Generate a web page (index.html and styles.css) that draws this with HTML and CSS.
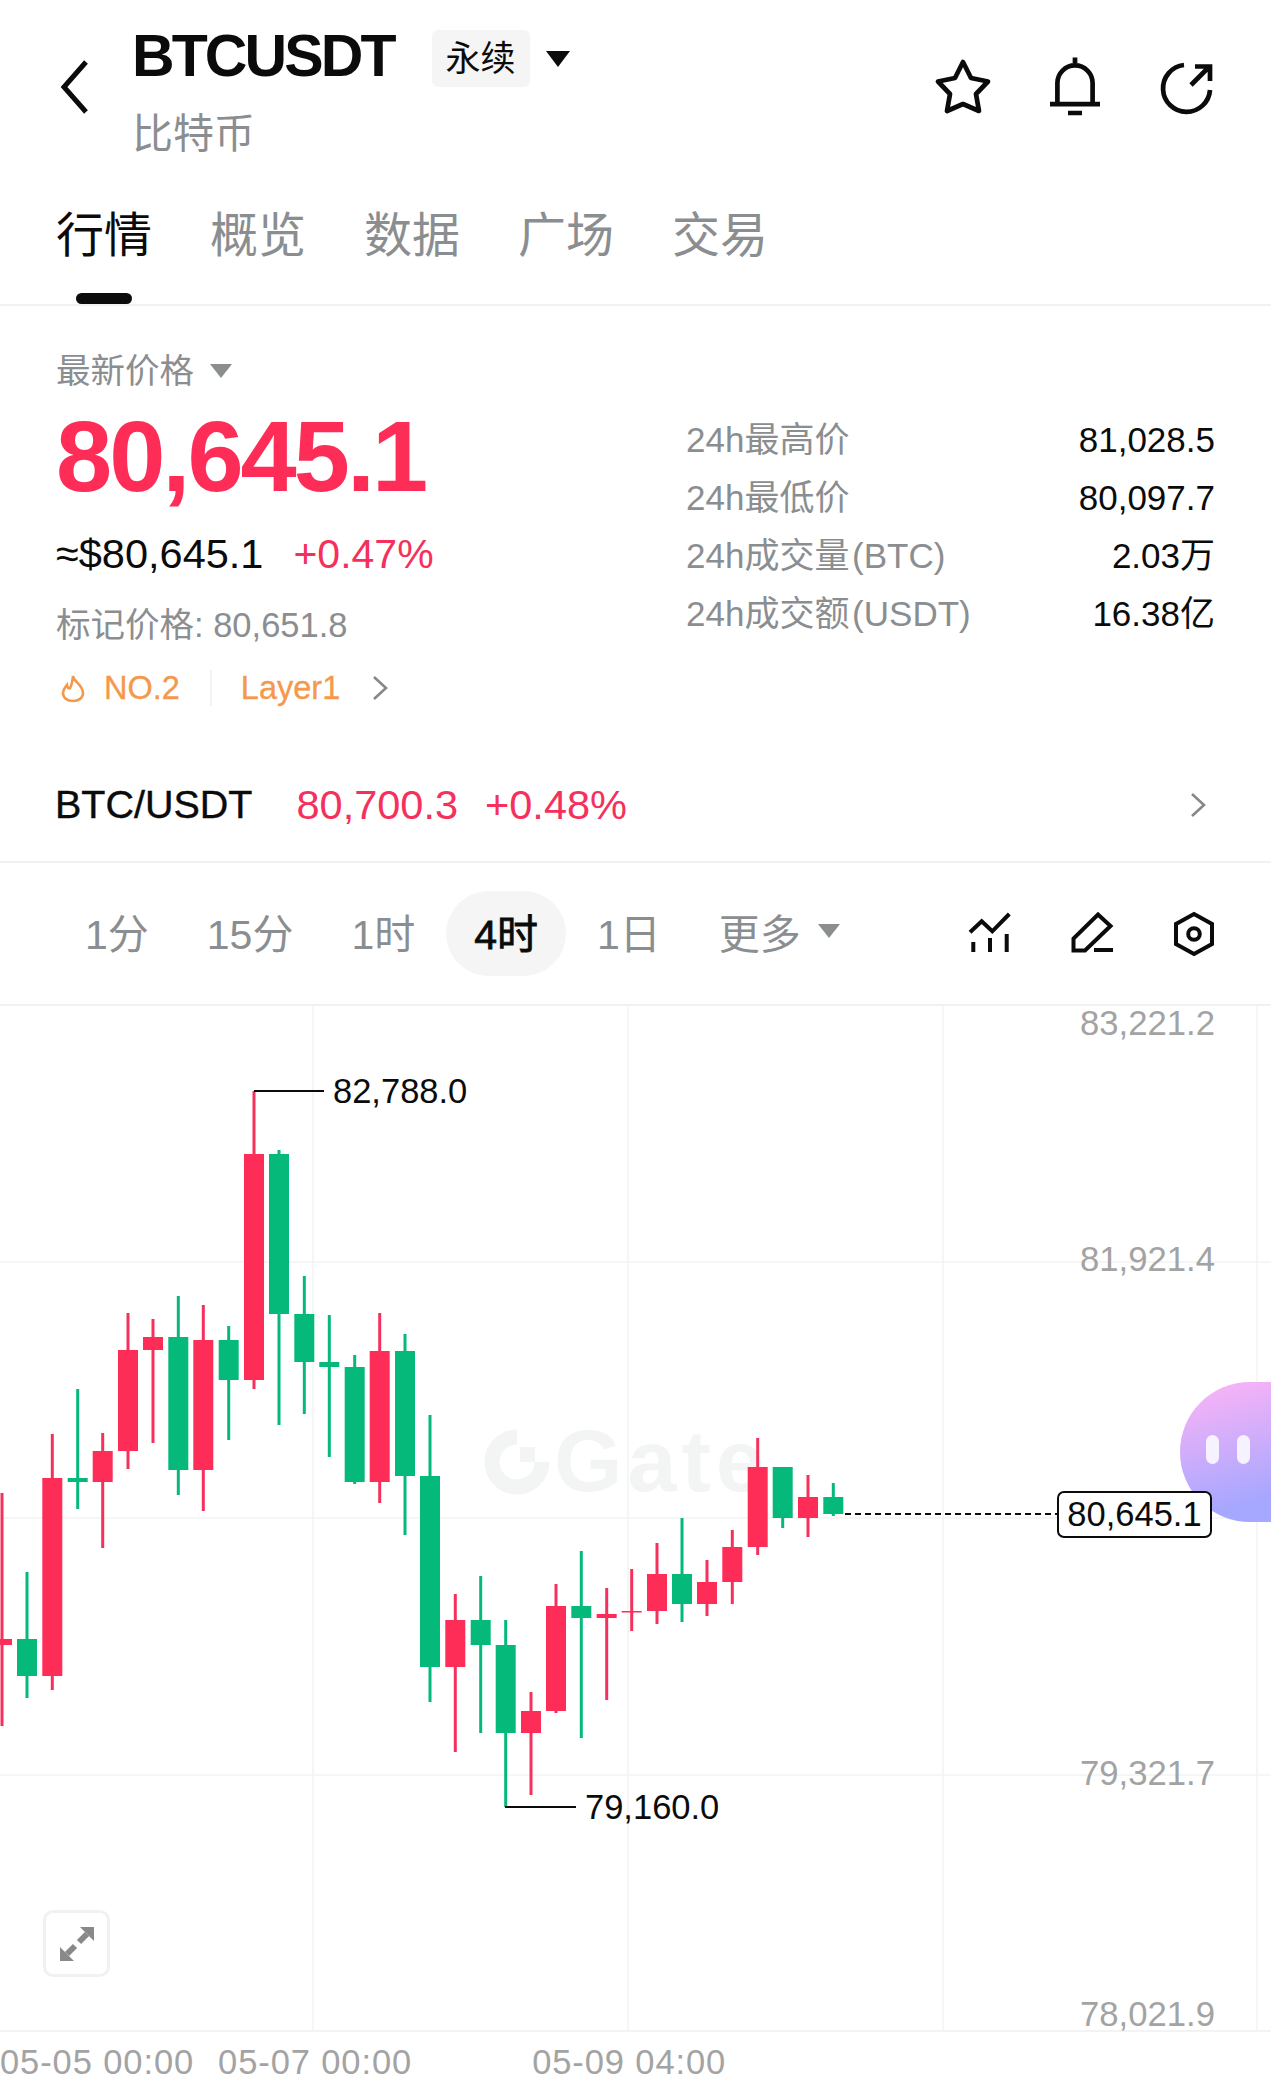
FILE: index.html
```html
<!DOCTYPE html>
<html lang="zh-CN">
<head>
    <meta charset="UTF-8">
    <meta name="viewport" content="width=device-width, initial-scale=1.0">
    <title>BTCUSDT</title>
    <link rel="stylesheet" href="styles.css">
</head>
<body>

    <!-- Top bar -->
    <header class="top-bar">
        <svg class="back-icon" viewBox="0 0 32 56" width="32" height="56"><path d="M27 3L5 28L27 53"/></svg>
        <div class="symbol">
            <div class="symbol-row">
                <h1 class="symbol-name">BTCUSDT</h1>
                <span class="symbol-badge">永续</span>
                <span class="caret caret-dark"></span>
            </div>
            <div class="symbol-sub">比特币</div>
        </div>
        <div class="actions">
            <svg class="icon" viewBox="0 0 60 60" width="60" height="60"><path d="M30 5L38 21L55 24.5L43 37L46 54L30 47L14 54L17 37L5 24.5L22 21Z"/></svg>
            <svg class="icon" viewBox="0 0 60 60" width="60" height="60"><path d="M12.4 47V26a17.6 17.6 0 0 1 35.2 0V47M5 47.2H55M30 .5V6M23 56H37"/></svg>
            <svg class="icon icon-miter" viewBox="0 0 60 60" width="60" height="60"><path d="M27 8A23.5 23.5 0 1 0 53 33M34 28L52 10M38 9.5H53V24"/></svg>
        </div>
    </header>

    <!-- Tabs -->
    <nav class="tabs">
        <a class="tab active">行情</a>
        <a class="tab">概览</a>
        <a class="tab">数据</a>
        <a class="tab">广场</a>
        <a class="tab">交易</a>
    </nav>

    <!-- Price block -->
    <section class="quote">
        <div class="quote-main">
            <div class="quote-label">最新价格 <span class="caret caret-gray"></span></div>
            <div class="quote-price">80,645.1</div>
            <div class="quote-fiat"><span>≈$80,645.1</span><span class="red quote-change">+0.47%</span></div>
            <div class="quote-mark">标记价格: 80,651.8</div>
            <div class="quote-tags">
                <svg class="flame" viewBox="0 0 24 29" width="24" height="29"><path d="M12 2C13 8 22 11 22 19C22 24 17.5 27 12 27C6.5 27 2 24 2 19C2 15 4.5 13 6 11C6.5 14 8 15 9 14C11 11 11.5 6 12 2Z"/></svg>
                <span class="tag-rank">NO.2</span>
                <span class="tag-sep"></span>
                <span class="tag-rank">Layer1</span>
                <svg class="chevron tag-chevron" viewBox="0 0 16 26" width="16" height="26"><path d="M2 2L14 13L2 24"/></svg>
            </div>
        </div>
        <div class="stats">
            <div class="stat"><span class="stat-key">24h最高价</span><span>81,028.5</span></div>
            <div class="stat"><span class="stat-key">24h最低价</span><span>80,097.7</span></div>
            <div class="stat"><span class="stat-key">24h成交量 (BTC)</span><span>2.03万</span></div>
            <div class="stat"><span class="stat-key">24h成交额 (USDT)</span><span>16.38亿</span></div>
        </div>
    </section>

    <!-- Spot pair -->
    <div class="spot">
        <span class="spot-name">BTC/USDT</span>
        <span class="red spot-price">80,700.3</span>
        <span class="red spot-change">+0.48%</span>
        <svg class="chevron spot-chevron" viewBox="0 0 16 26" width="16" height="26"><path d="M2 2L14 13L2 24"/></svg>
    </div>

    <!-- Intervals -->
    <div class="ranges">
        <span class="range">1分</span>
        <span class="range">15分</span>
        <span class="range">1时</span>
        <span class="range active">4时</span>
        <span class="range">1日</span>
        <span class="range range-more">更多<span class="caret caret-gray"></span></span>
        <div class="tools">
            <svg class="icon icon-thin" viewBox="0 0 60 60" width="60" height="60"><path d="M10 28.3L21.7 17.3L32.3 27.3L49.3 10M13.3 38V48M30 34V48M46.7 30V48"/></svg>
            <svg class="icon icon-thin" viewBox="0 0 60 60" width="60" height="60"><path d="M36 10.5L48.5 22L23 46.5H11.5V34.5ZM32 46H51"/></svg>
            <svg class="icon icon-thin" viewBox="0 0 60 60" width="60" height="60"><path d="M30 10L48 20V40L30 50L12 40V20Z"/><circle cx="30" cy="30" r="5.8"/></svg>
        </div>
    </div>

    <!-- Chart -->
    <div class="chart">
        <svg class="chart-canvas" viewBox="0 1006 1271 1026" width="1271" height="1026">
            <g class="grid">
                <path d="M0 1262H1271M0 1518H1271M0 1775H1271M313 1006V2032M628 1006V2032M943 1006V2032M1257 1006V2032"/>
            </g>
            <g class="watermark">
                <path class="watermark-ring" d="M517 1437A25 25 0 1 0 542 1462"/>
                <rect x="520" y="1447" width="15" height="15"/>
                <text x="554" y="1491">Gate</text>
            </g>
            <g class="rise"><path d="M2 1493V1726"/><rect x="-8" y="1639" width="20" height="6"/></g>
            <g class="fall"><path d="M27 1572V1698"/><rect x="17" y="1639" width="20" height="37"/></g>
            <g class="rise"><path d="M52.3 1434V1690"/><rect x="42.3" y="1478" width="20" height="198"/></g>
            <g class="fall"><path d="M77.7 1389V1509"/><rect x="67.7" y="1478" width="20" height="4"/></g>
            <g class="rise"><path d="M102.7 1433V1548"/><rect x="92.7" y="1451" width="20" height="31"/></g>
            <g class="rise"><path d="M128 1313V1469"/><rect x="118" y="1350" width="20" height="101"/></g>
            <g class="rise"><path d="M153 1319V1443"/><rect x="143" y="1337" width="20" height="13"/></g>
            <g class="fall"><path d="M178.3 1296V1495"/><rect x="168.3" y="1337" width="20" height="133"/></g>
            <g class="rise"><path d="M203.3 1305V1511"/><rect x="193.3" y="1340" width="20" height="130"/></g>
            <g class="fall"><path d="M228.7 1326V1440"/><rect x="218.7" y="1340" width="20" height="40"/></g>
            <g class="rise"><path d="M254 1091V1389"/><rect x="244" y="1154" width="20" height="226"/></g>
            <g class="fall"><path d="M279 1150V1425"/><rect x="269" y="1154" width="20" height="160"/></g>
            <g class="fall"><path d="M304.3 1276V1414"/><rect x="294.3" y="1314" width="20" height="48"/></g>
            <g class="fall"><path d="M329.3 1315V1457"/><rect x="319.3" y="1362" width="20" height="5"/></g>
            <g class="fall"><path d="M354.7 1355V1484"/><rect x="344.7" y="1367" width="20" height="115"/></g>
            <g class="rise"><path d="M379.7 1313V1503"/><rect x="369.7" y="1351" width="20" height="131"/></g>
            <g class="fall"><path d="M405 1334V1535"/><rect x="395" y="1351" width="20" height="125"/></g>
            <g class="fall"><path d="M430 1415V1702"/><rect x="420" y="1476" width="20" height="191"/></g>
            <g class="rise"><path d="M455.3 1594V1752"/><rect x="445.3" y="1620" width="20" height="47"/></g>
            <g class="fall"><path d="M480.7 1576V1733"/><rect x="470.7" y="1620" width="20" height="25"/></g>
            <g class="fall"><path d="M505.7 1620V1807"/><rect x="495.7" y="1645" width="20" height="88"/></g>
            <g class="rise"><path d="M531 1692V1795"/><rect x="521" y="1711" width="20" height="22"/></g>
            <g class="rise"><path d="M556 1584V1713"/><rect x="546" y="1606" width="20" height="105"/></g>
            <g class="fall"><path d="M581.3 1551V1738"/><rect x="571.3" y="1606" width="20" height="12"/></g>
            <g class="rise"><path d="M606.7 1588V1700"/><rect x="596.7" y="1614" width="20" height="4"/></g>
            <g class="rise"><path d="M631.7 1569V1631"/><rect x="621.7" y="1611" width="20" height="1.5"/></g>
            <g class="rise"><path d="M657 1543V1624"/><rect x="647" y="1574" width="20" height="37"/></g>
            <g class="fall"><path d="M682 1518V1622"/><rect x="672" y="1574" width="20" height="30"/></g>
            <g class="rise"><path d="M707 1560V1616"/><rect x="697" y="1582" width="20" height="22"/></g>
            <g class="rise"><path d="M732.3 1530V1604"/><rect x="722.3" y="1547" width="20" height="35"/></g>
            <g class="rise"><path d="M757.7 1438V1555"/><rect x="747.7" y="1467" width="20" height="80"/></g>
            <g class="fall"><path d="M782.7 1467V1528"/><rect x="772.7" y="1467" width="20" height="51"/></g>
            <g class="rise"><path d="M808 1475V1537"/><rect x="798" y="1497" width="20" height="21"/></g>
            <g class="fall"><path d="M833.3 1483V1516"/><rect x="823.3" y="1497" width="20" height="17"/></g>

            <path class="leader" d="M254 1091H324M505 1807H576"/>
            <path class="last-line" d="M845 1514H1058"/>
            <text class="extreme" x="333" y="1103">82,788.0</text>
            <text class="extreme" x="585" y="1819">79,160.0</text>
            <text class="axis-y" x="1215" y="1035">83,221.2</text>
            <text class="axis-y" x="1215" y="1271">81,921.4</text>
            <text class="axis-y" x="1215" y="1785">79,321.7</text>
            <text class="axis-y" x="1215" y="2026">78,021.9</text>
        </svg>

        <div class="bot-bubble"><span class="bot-eye"></span><span class="bot-eye"></span></div>
        <div class="last-price">80,645.1</div>
        <div class="expand">
            <svg viewBox="0 0 34 34" width="34" height="34"><path class="expand-head" d="M20 0H34V14ZM0 34H14L0 20Z"/><path class="expand-shaft" d="M27 7L19 15M7 27L15 19"/></svg>
        </div>
    </div>

    <div class="axis-x">
        <span>05-05 00:00</span>
        <span class="axis-x-second">05-07 00:00</span>
        <span class="axis-x-third">05-09 04:00</span>
    </div>

</body>
</html>
```

FILE: styles.css
```css
* { box-sizing: border-box; }

body {
    margin: 0;
    width: 1271px;
    height: 2090px;
    overflow: hidden;
    background: #fff;
    color: #0b0b0b;
    font-family: "Liberation Sans", "Noto Sans CJK SC", sans-serif;
}

.red { color: #f6305c; }

/* shared icons */
.icon { fill: none; stroke: #0b0b0b; stroke-width: 4.7; stroke-linejoin: round; flex: none; }
.icon-miter { stroke-linejoin: miter; }
.icon-thin { stroke-width: 4; stroke-linejoin: miter; }
.chevron { fill: none; stroke: #85888a; stroke-width: 2.6; flex: none; }

.caret {
    display: inline-block;
    width: 0;
    height: 0;
    border-style: solid;
    border-color: transparent;
    border-bottom-width: 0;
}
.caret-dark { border-width: 16px 12px 0; border-top-color: #0b0b0b; margin-left: 16px; margin-top: 5px; }
.caret-gray { border-width: 14px 11px 0; border-top-color: #8b8e90; }

/* top bar */
.top-bar { display: flex; height: 190px; padding: 0 54px 0 59px; }
.back-icon { fill: none; stroke: #0b0b0b; stroke-width: 5; margin-top: 59px; flex: none; }
.symbol { margin-left: 41px; padding-top: 23px; }
.symbol-row { display: flex; align-items: center; height: 66px; }
.symbol-name { margin: 0; font-size: 59px; font-weight: 700; letter-spacing: -2.9px; line-height: 56px; }
.symbol-badge {
    width: 98px;
    height: 57px;
    margin-left: 38px;
    margin-top: 4px;
    border-radius: 6px;
    background: #f5f5f5;
    font-size: 35px;
    line-height: 57px;
    text-align: center;
}
.symbol-sub { margin-top: 19px; font-size: 41px; line-height: 52px; color: #8b8e90; }
.actions { display: flex; gap: 52px; margin-left: auto; margin-top: 57px; }

/* tabs */
.tabs { display: flex; gap: 58px; height: 116px; padding-left: 56px; border-bottom: 2px solid #f1f1f1; }
.tab { position: relative; height: 114px; font-size: 48px; line-height: 92px; color: #8b8e90; }
.tab.active { color: #0b0b0b; }
.tab.active::after {
    content: "";
    position: absolute;
    left: 20px;
    bottom: 0;
    width: 56px;
    height: 11px;
    border-radius: 6px;
    background: #0b0b0b;
}

/* price block */
.quote { display: flex; }
.quote-main { width: 686px; padding: 43px 0 40px 56px; }
.quote-label { display: flex; align-items: center; gap: 16px; font-size: 34.5px; line-height: 44px; color: #8b8e90; }
.quote-price { height: 100px; margin-top: 13px; font-size: 101px; font-weight: 700; letter-spacing: -3px; line-height: 100px; color: #fe2d58; }
.quote-fiat { display: flex; gap: 30px; margin-top: 23px; font-size: 41.5px; line-height: 50px; }
.quote-change { font-size: 41px; }
.quote-mark { margin-top: 24px; font-size: 34.5px; line-height: 44px; color: #8b8e90; }
.quote-tags { display: flex; align-items: center; height: 40px; margin-top: 21px; padding-left: 5px; font-size: 32.5px; color: #f5984c; }
.flame { fill: none; stroke: #f5984c; stroke-width: 2.6; margin-right: 19px; }
.tag-rank { -webkit-text-stroke: .3px #f5984c; }
.tag-sep { width: 2px; height: 36px; margin: 0 29px 0 30px; background: #f3f3f3; }
.tag-chevron { margin-left: 32px; }

.stats { flex: 1; padding: 105px 56px 0 0; }
.stat { display: flex; justify-content: space-between; height: 58px; font-size: 35px; line-height: 58px; }
.stat-key { color: #8b8e90; word-spacing: -7px; }

/* spot pair */
.spot { display: flex; align-items: center; height: 115px; padding: 0 65px 0 55px; border-bottom: 2px solid #f1f1f1; font-size: 41.5px; }
.spot-name { font-size: 39.5px; -webkit-text-stroke: .4px #0b0b0b; }
.spot-price { margin-left: 44px; }
.spot-change { margin-left: 27px; }
.spot-chevron { margin-left: auto; }

/* intervals */
.ranges { display: flex; align-items: center; gap: 4px; height: 143px; padding: 0 47px 0 58px; border-bottom: 2px solid #f1f1f1; }
.range { display: flex; align-items: center; height: 85px; padding: 0 27px 5px; border-radius: 43px; font-size: 41px; color: #8b8e90; }
.range.active { padding: 0 28px 5px; background: #f5f5f5; color: #0b0b0b; -webkit-text-stroke: .8px #0b0b0b; }
.range-more { gap: 17px; }
.tools { display: flex; gap: 42px; margin-left: auto; }

/* chart */
.chart { position: relative; height: 1026px; border-bottom: 2px solid #f3f3f3; }
.chart-canvas { display: block; overflow: visible; }
.grid path { fill: none; stroke: #f3f3f3; stroke-width: 1.5; }
.watermark { fill: #f3f4f4; }
.watermark-ring { fill: none; stroke: #f3f4f4; stroke-width: 15; }
.watermark text { font-size: 88px; font-weight: 700; letter-spacing: 5px; }
.rise rect { fill: #fe2d58; }
.rise path { stroke: #f6305c; stroke-width: 3; }
.fall rect { fill: #05b97a; }
.fall path { stroke: #05b97a; stroke-width: 3; }
.leader { fill: none; stroke: #0b0b0b; stroke-width: 2; }
.last-line { fill: none; stroke: #0b0b0b; stroke-width: 2; stroke-dasharray: 6 4; }
.extreme { font-size: 34.5px; fill: #0b0b0b; }
.axis-y { font-size: 34.7px; fill: #a3a3a3; text-anchor: end; }

.bot-bubble {
    position: absolute;
    left: 1180px;
    top: 376px;
    display: flex;
    gap: 18px;
    width: 91px;
    height: 140px;
    padding: 53px 0 0 26px;
    border-radius: 70px 0 0 70px;
    background: linear-gradient(165deg, #ffb4f6, #a6a7ff 85%);
}
.bot-eye { width: 13px; height: 29px; border-radius: 7px; background: #f7f2ff; }

.last-price {
    position: absolute;
    left: 1057px;
    top: 485px;
    width: 155px;
    height: 47px;
    border: 2px solid #0b0b0b;
    border-radius: 7px;
    background: #fff;
    font-size: 34.5px;
    line-height: 43px;
    text-align: center;
}

.expand {
    position: absolute;
    left: 43px;
    top: 904px;
    display: flex;
    align-items: center;
    justify-content: center;
    width: 67px;
    height: 67px;
    border: 3px solid #f1f1f1;
    border-radius: 10px;
    background: #fff;
}
.expand-head { fill: #87898b; }
.expand-shaft { fill: none; stroke: #87898b; stroke-width: 6; }

/* time axis */
.axis-x { display: flex; font-size: 34.5px; letter-spacing: .9px; line-height: 60px; color: #a3a3a3; }
.axis-x-second { margin-left: 24px; }
.axis-x-third { margin-left: 120px; }
```
